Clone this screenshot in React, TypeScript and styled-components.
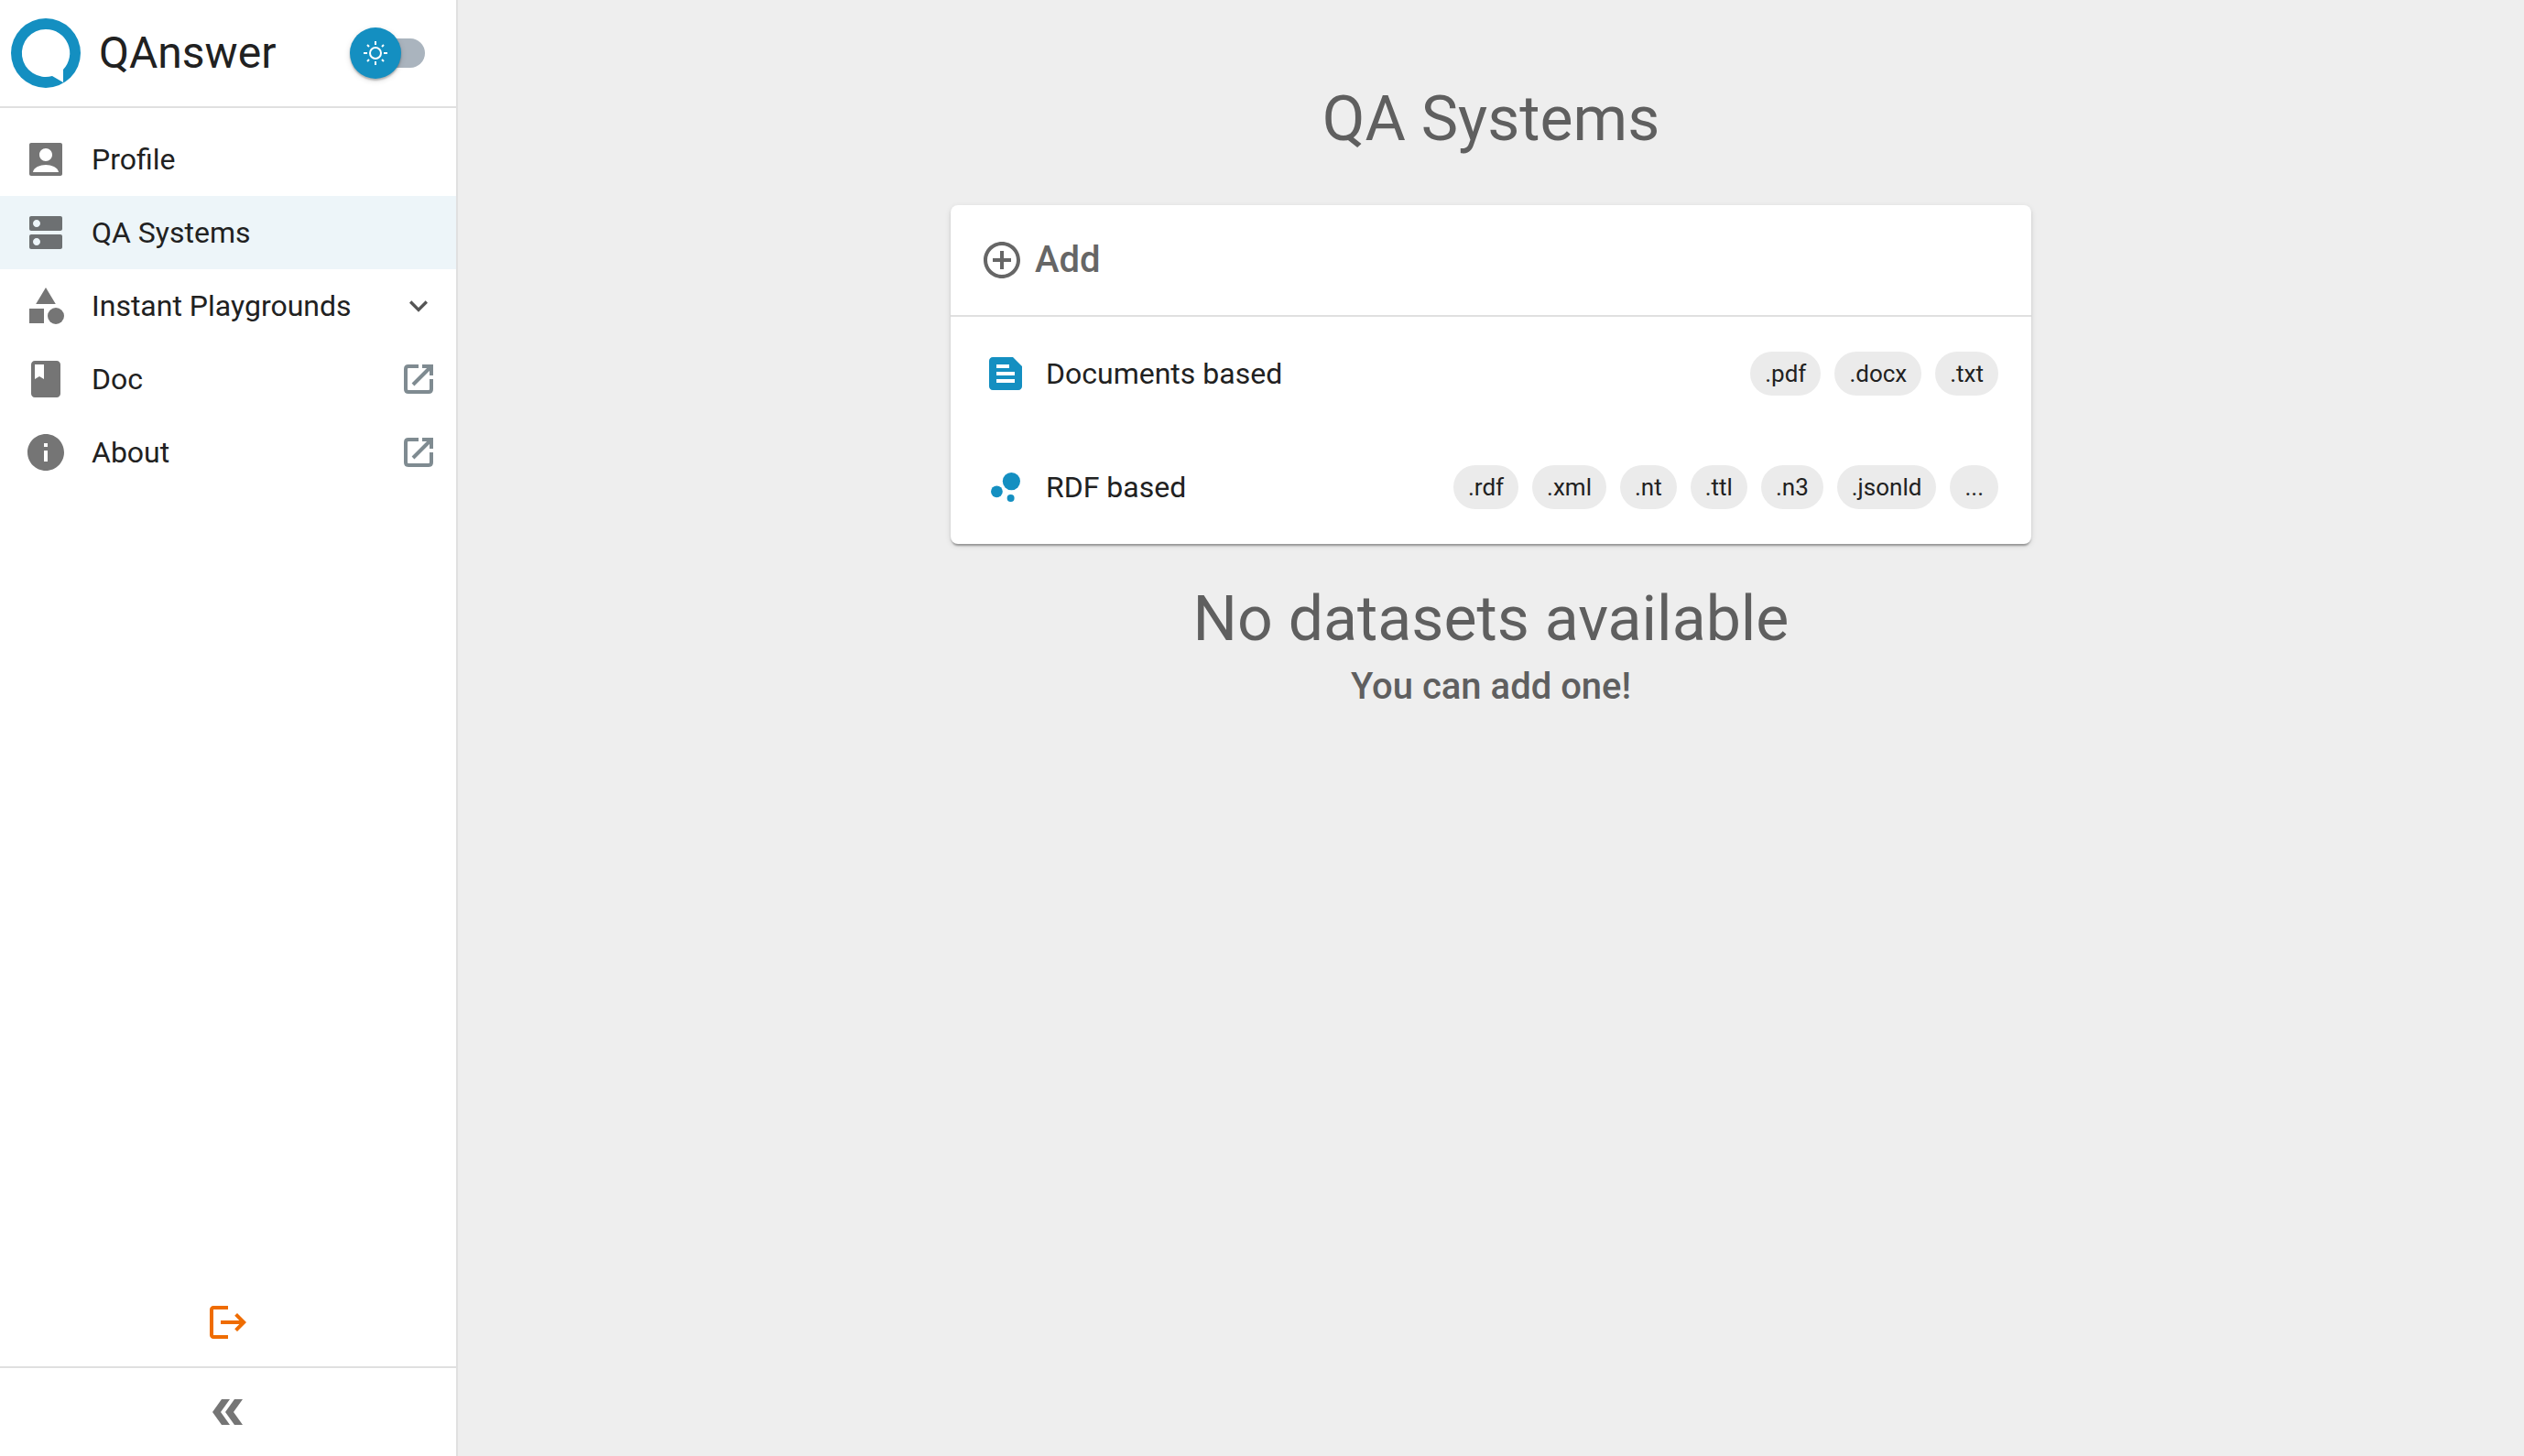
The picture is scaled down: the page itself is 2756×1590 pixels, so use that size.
import React, { useState } from "react";
import styled, { createGlobalStyle } from "styled-components";

const blue = "#148fc1";
const line = "#e0e0e0";

const GlobalStyle = createGlobalStyle`
  *, *::before, *::after { box-sizing: border-box; }
  html, body { margin: 0; }
  body {
    background: #eeeeee;
    color: #212121;
    font-family: Roboto, "Liberation Sans", sans-serif;
    font-size: 32px;
    line-height: 48px;
    -webkit-font-smoothing: antialiased;
  }
  button { font: inherit; color: inherit; border: 0; background: none; padding: 0; cursor: pointer; }
  a { color: inherit; text-decoration: none; }
  h1, h2, p { margin: 0; padding: 0; }
`;

const Shell = styled.div`
  display: flex;
  min-height: 100vh;
`;

const Sidebar = styled.aside`
  display: flex;
  flex-direction: column;
  flex: 0 0 500px;
  background: #ffffff;
  border-right: 2px solid ${line};
`;

const Brand = styled.div`
  display: flex;
  align-items: center;
  gap: 20px;
  padding: 20px 34px 20px 12px;
  border-bottom: 2px solid ${line};
`;

const BrandName = styled.span`
  flex: 1;
  font-size: 48px;
  line-height: 64px;
`;

const Logo = styled.svg`
  width: 76px;
  height: 76px;
  flex: none;
`;

const Switch = styled.label`
  display: flex;
  align-items: center;
  position: relative;
  width: 82px;
  height: 56px;
  cursor: pointer;
`;

const SwitchInput = styled.input`
  appearance: none;
  width: 78px;
  height: 32px;
  margin: 0 0 0 auto;
  border-radius: 16px;
  background: #aab4be;
  cursor: pointer;
`;

const SwitchThumb = styled.span<{ $on: boolean }>`
  position: absolute;
  top: 0;
  left: ${(p) => (p.$on ? "26px" : "0")};
  display: grid;
  place-items: center;
  width: 56px;
  height: 56px;
  border-radius: 50%;
  background: ${blue};
  color: #ffffff;
  box-shadow: 0 2px 2px rgba(0, 0, 0, 0.24), 0 2px 6px rgba(0, 0, 0, 0.14);
  pointer-events: none;
`;

const Nav = styled.nav`
  flex: 1;
  padding: 16px 0;
`;

const navItem = `
  display: flex;
  align-items: center;
  width: 100%;
  height: 80px;
  padding: 0 21px 0 26px;
  text-align: left;
`;

const NavLink = styled.a<{ $selected?: boolean }>`
  ${navItem}
  background: ${(p) => (p.$selected ? "#edf5f9" : "transparent")};
`;

const NavButton = styled.button`
  ${navItem}
`;

const NavLabel = styled.span`
  flex: 1;
  padding-left: 26px;
`;

const Icon = styled.svg<{ $size?: number; $color?: string }>`
  flex: none;
  display: block;
  width: ${(p) => p.$size ?? 48}px;
  height: ${(p) => p.$size ?? 48}px;
  fill: ${(p) => p.$color ?? "rgba(0, 0, 0, 0.54)"};
`;

const FooterRow = styled.div<{ $divided?: boolean }>`
  display: flex;
  justify-content: center;
  align-items: center;
  height: ${(p) => (p.$divided ? 98 : 96)}px;
  border-top: ${(p) => (p.$divided ? `2px solid ${line}` : "0")};
`;

const Main = styled.main`
  flex: 1;
  display: flex;
  flex-direction: column;
  align-items: center;
  padding: 88px 32px 32px;
`;

const Title = styled.h1`
  font-size: 68px;
  font-weight: 400;
  line-height: 84px;
  color: #5f5f5f;
`;

const Subtitle = styled.p`
  font-size: 40px;
  font-weight: 500;
  line-height: 64px;
  color: #5f5f5f;
`;

const Card = styled.section`
  width: 100%;
  max-width: 1180px;
  margin: 52px 0 40px;
  border-radius: 8px;
  background: #ffffff;
  box-shadow: 0 4px 2px -2px rgba(0, 0, 0, 0.2), 0 2px 2px rgba(0, 0, 0, 0.14), 0 2px 6px rgba(0, 0, 0, 0.12);
`;

const CardHeader = styled.div`
  display: flex;
  align-items: center;
  gap: 12px;
  height: 122px;
  padding: 0 32px;
  border-bottom: 2px solid ${line};
`;

const CardTitle = styled.h2`
  font-size: 40px;
  font-weight: 500;
  line-height: 64px;
  color: #666666;
`;

const SourceRow = styled.button`
  display: flex;
  align-items: center;
  gap: 20px;
  width: 100%;
  height: 124px;
  padding: 0 36px;
  text-align: left;
`;

const SourceName = styled.span`
  flex: 1;
`;

const Chips = styled.span`
  display: flex;
  gap: 15px;
`;

const Chip = styled.span`
  height: 48px;
  padding: 0 16px;
  border-radius: 24px;
  background: #ebebeb;
  font-size: 26px;
  line-height: 48px;
`;

const paths = {
  account:
    "M4 3h16c.55 0 1 .45 1 1v16c0 .55-.45 1-1 1H4c-.55 0-1-.45-1-1V4c0-.55.45-1 1-1zm8 3c-1.930 0-3.500 1.570-3.500 3.500S10.070 13 12 13s3.500-1.570 3.500-3.500S13.930 6 12 6zm-7 13h14c-.3-2.600-4-4-7-4s-6.700 1.400-7 4z",
  dns: "M20 13H4c-.55 0-1 .45-1 1v6c0 .55.45 1 1 1h16c.55 0 1-.45 1-1v-6c0-.55-.45-1-1-1zM7 19c-1.100 0-2-.9-2-2s.9-2 2-2 2 .9 2 2-.9 2-2 2zM20 3H4c-.55 0-1 .45-1 1v6c0 .55.45 1 1 1h16c.55 0 1-.45 1-1V4c0-.55-.45-1-1-1zM7 9c-1.100 0-2-.9-2-2s.9-2 2-2 2 .9 2 2-.9 2-2 2z",
  book: "M18 2H6c-1.100 0-2 .9-2 2v16c0 1.100.9 2 2 2h12c1.100 0 2-.9 2-2V4c0-1.100-.9-2-2-2zM6 4h5v8l-2.500-1.500L6 12V4z",
  info: "M12 2C6.480 2 2 6.480 2 12s4.480 10 10 10 10-4.480 10-10S17.520 2 12 2zm1 15h-2v-6h2v6zm0-8h-2V7h2v2z",
  expand: "M16.590 8.590 12 13.170 7.410 8.590 6 10l6 6 6-6z",
  logout:
    "m17 7-1.410 1.410L18.170 11H8v2h10.170l-2.580 2.580L17 17l5-5zM4 5h8V3H4c-1.100 0-2 .9-2 2v14c0 1.100.9 2 2 2h8v-2H4V5z",
  collapse: "M8.500 19H13l-5-7 5-7H8.500l-5 7zM15.500 19H20l-5-7 5-7h-4.500l-5 7z",
  add: "M13 7h-2v4H7v2h4v4h2v-4h4v-2h-4V7zm-1-5C6.480 2 2 6.480 2 12s4.480 10 10 10 10-4.480 10-10S17.520 2 12 2zm0 18c-4.410 0-8-3.590-8-8s3.590-8 8-8 8 3.590 8 8-3.590 8-8 8z",
  feed: "M16 3H5c-1.100 0-2 .9-2 2v14c0 1.100.9 2 2 2h14c1.100 0 2-.9 2-2V8l-5-5zM7 7h7v2H7V7zm10 10H7v-2h10v2zm0-4H7v-2h10v2z",
};

const Glyph = ({ name, size, color }: { name: keyof typeof paths; size?: number; color?: string }) => (
  <Icon viewBox="0 0 24 24" $size={size} $color={color} fillRule="evenodd" aria-hidden="true">
    <path d={paths[name]} />
  </Icon>
);

const ShapesIcon = () => (
  <Icon viewBox="0 0 24 24" aria-hidden="true">
    <path d="M12 2 6.600 11h10.800zM3 13.500h8v8H3z" />
    <circle cx="17.500" cy="17.500" r="4.500" />
  </Icon>
);

const BubblesIcon = () => (
  <Icon viewBox="0 0 24 24" $color={blue} aria-hidden="true">
    <circle cx="7.200" cy="14.400" r="3.200" />
    <circle cx="14.800" cy="18" r="2" />
    <circle cx="15.200" cy="8.800" r="4.800" />
  </Icon>
);

const ExternalIcon = () => (
  <Icon viewBox="0 0 40 40" $size={40} $color="none" stroke="#7f8b91" strokeWidth="4" aria-hidden="true">
    <path d="M20 6H9q-3 0-3 3v22q0 3 3 3h22q3 0 3-3V20M24 6h10v10M34 6 14 26" />
  </Icon>
);

const SunIcon = () => (
  <Icon viewBox="0 0 40 40" $size={40} $color="none" stroke="currentColor" strokeWidth="2" aria-hidden="true">
    <circle cx="20" cy="20" r="6" />
    <path d="M20 7v4M20 29v4M7 20h4M29 20h4M11 11l2 2M27 27l2 2M11 29l2-2M27 13l2-2" />
  </Icon>
);

const sources = [
  { name: "Documents based", icon: <Glyph name="feed" color={blue} />, types: [".pdf", ".docx", ".txt"] },
  { name: "RDF based", icon: <BubblesIcon />, types: [".rdf", ".xml", ".nt", ".ttl", ".n3", ".jsonld", "..."] },
];

export default function App() {
  const [dark, setDark] = useState(false);
  return (
    <Shell>
      <GlobalStyle />
      <Sidebar>
        <Brand>
          <Logo viewBox="0 0 76 76" aria-hidden="true">
            <circle cx="38" cy="38" r="38" fill={blue} />
            <path fill="#ffffff" d="M38 12a26 26 0 1 0 7 51L57 70V56A26 26 0 0 0 38 12z" />
          </Logo>
          <BrandName>QAnswer</BrandName>
          <Switch>
            <SwitchInput
              type="checkbox"
              aria-label="Dark mode"
              checked={dark}
              onChange={(e) => setDark(e.target.checked)}
            />
            <SwitchThumb $on={dark}>
              <SunIcon />
            </SwitchThumb>
          </Switch>
        </Brand>
        <Nav>
          <NavLink href="#profile">
            <Glyph name="account" />
            <NavLabel>Profile</NavLabel>
          </NavLink>
          <NavLink href="#systems" $selected aria-current="page">
            <Glyph name="dns" />
            <NavLabel>QA Systems</NavLabel>
          </NavLink>
          <NavButton type="button" aria-expanded="false">
            <ShapesIcon />
            <NavLabel>Instant Playgrounds</NavLabel>
            <Glyph name="expand" size={40} color="#555555" />
          </NavButton>
          <NavLink href="#doc">
            <Glyph name="book" />
            <NavLabel>Doc</NavLabel>
            <ExternalIcon />
          </NavLink>
          <NavLink href="#about">
            <Glyph name="info" />
            <NavLabel>About</NavLabel>
            <ExternalIcon />
          </NavLink>
        </Nav>
        <FooterRow>
          <button type="button" aria-label="Log out">
            <Glyph name="logout" color="#ef6c00" />
          </button>
        </FooterRow>
        <FooterRow $divided>
          <button type="button" aria-label="Collapse sidebar">
            <Glyph name="collapse" />
          </button>
        </FooterRow>
      </Sidebar>
      <Main>
        <Title>QA Systems</Title>
        <Card>
          <CardHeader>
            <Glyph name="add" color="#666666" />
            <CardTitle>Add</CardTitle>
          </CardHeader>
          {sources.map((s) => (
            <SourceRow key={s.name} type="button">
              {s.icon}
              <SourceName>{s.name}</SourceName>
              <Chips>
                {s.types.map((t) => (
                  <Chip key={t}>{t}</Chip>
                ))}
              </Chips>
            </SourceRow>
          ))}
        </Card>
        <Title as="h2">No datasets available</Title>
        <Subtitle>You can add one!</Subtitle>
      </Main>
    </Shell>
  );
}
